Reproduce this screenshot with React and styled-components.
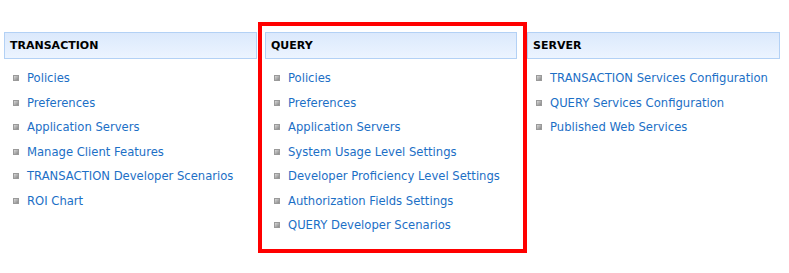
import React from 'react';
import styled, { createGlobalStyle } from 'styled-components';

const GlobalStyle = createGlobalStyle`
  body {
    margin: 0;
    background: #ffffff;
    font-family: "DejaVu Sans", Verdana, sans-serif;
  }
`;

const Page = styled.div`
  display: flex;
  align-items: flex-start;
  width: 789px;
  height: 273px;
  padding-left: 4px;
  box-sizing: border-box;
`;

const Column = styled.div`
  width: 253px;
  margin-top: ${(p) => (p.$highlight ? '22px' : '32px')};
  margin-left: ${(p) => p.$gap || 0}px;
  ${(p) =>
    p.$highlight &&
    `
    box-sizing: border-box;
    width: 269px;
    height: 231px;
    border: 4px solid #ff0000;
    padding: 6px 6px 0 3px;
  `}
`;

const Header = styled.div`
  height: 25px;
  display: flex;
  align-items: center;
  padding-left: 5px;
  border: 1px solid #b3d1f5;
  background: linear-gradient(to bottom, #dbe9fc, #ecf4ff);
  font-size: 11px;
  font-weight: bold;
  color: #000;
`;

const List = styled.ul`
  list-style: none;
  margin: 0;
  padding: 7px 0 0 9px;
`;

const Item = styled.li`
  display: flex;
  align-items: center;
  height: 24.5px;
`;

const Bullet = styled.span`
  width: 6px;
  height: 6px;
  margin-right: 8px;
  box-sizing: border-box;
  border: 1px solid #9a9a9a;
  background: linear-gradient(135deg, #d8d8d8, #8a8a8a);
  flex-shrink: 0;
`;

const Link = styled.a`
  font-size: 11.6px;
  color: #1c6fc6;
  text-decoration: none;
  white-space: nowrap;
`;

const columns = [
  {
    title: 'TRANSACTION',
    links: [
      'Policies',
      'Preferences',
      'Application Servers',
      'Manage Client Features',
      'TRANSACTION Developer Scenarios',
      'ROI Chart',
    ],
  },
  {
    title: 'QUERY',
    highlight: true,
    gap: 1,
    links: [
      'Policies',
      'Preferences',
      'Application Servers',
      'System Usage Level Settings',
      'Developer Proficiency Level Settings',
      'Authorization Fields Settings',
      'QUERY Developer Scenarios',
    ],
  },
  {
    title: 'SERVER',
    links: [
      'TRANSACTION Services Configuration',
      'QUERY Services Configuration',
      'Published Web Services',
    ],
  },
];

export default function App() {
  return (
    <>
      <GlobalStyle />
      <Page>
        {columns.map((col) => (
          <Column key={col.title} $highlight={col.highlight} $gap={col.gap}>
            <Header>{col.title}</Header>
            <List>
              {col.links.map((link) => (
                <Item key={link}>
                  <Bullet />
                  <Link href="#">{link}</Link>
                </Item>
              ))}
            </List>
          </Column>
        ))}
      </Page>
    </>
  );
}
